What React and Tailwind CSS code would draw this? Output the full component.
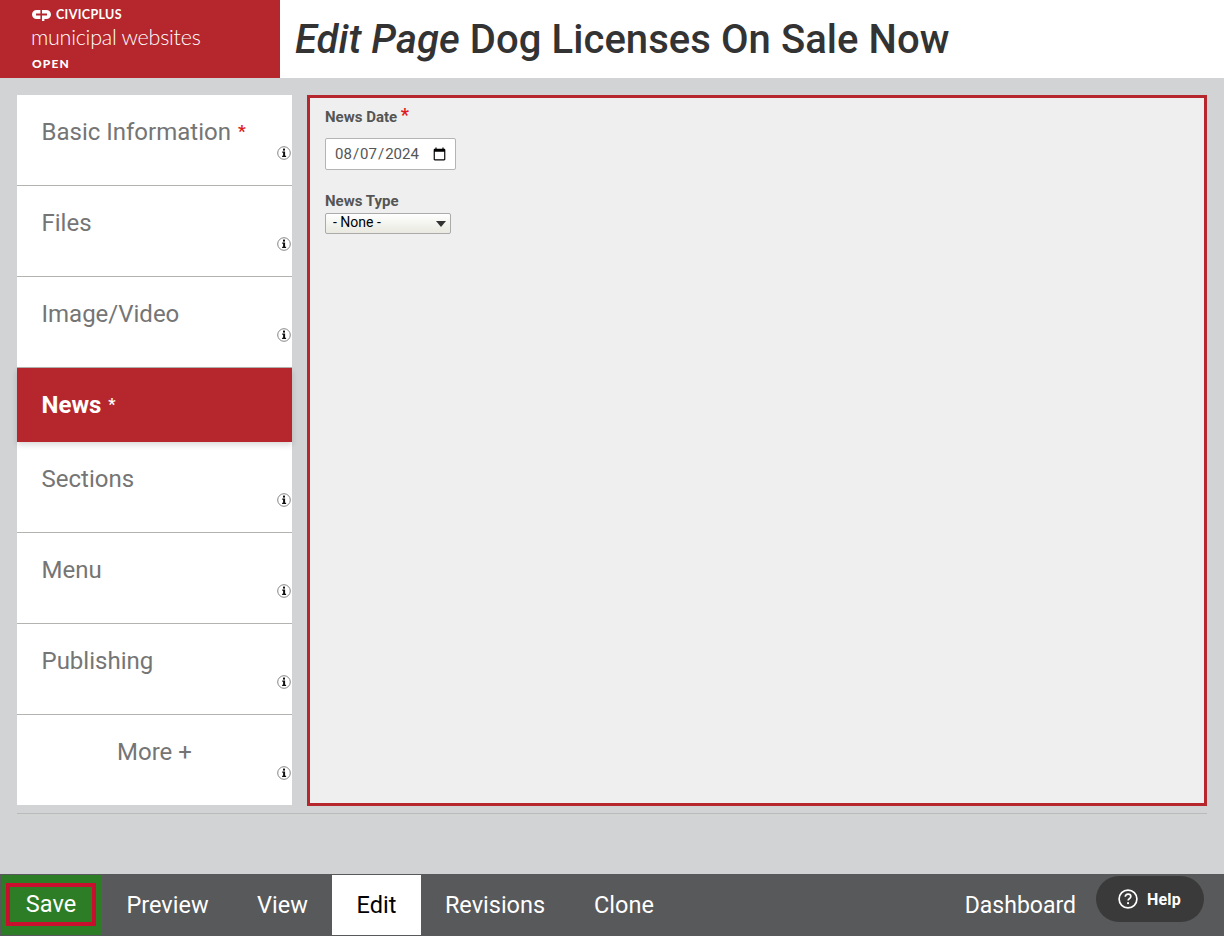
import React from 'react';

const tabs = [
  { label: 'Basic Information', req: true },
  { label: 'Files' },
  { label: 'Image/Video' },
  { label: 'News', req: true, active: true },
  { label: 'Sections' },
  { label: 'Menu' },
  { label: 'Publishing' },
  { label: 'More +', center: true, last: true },
];

const actions = [
  { label: 'Preview', cls: 'w-[131px]' },
  { label: 'View', cls: 'w-[99px]' },
  { label: 'Edit', cls: 'w-[89px] bg-white !text-black', },
  { label: 'Revisions', cls: 'w-[148px]' },
  { label: 'Clone', cls: 'w-[110px]' },
];

function InfoIcon() {
  return (
    <svg width="14" height="14" viewBox="0 0 14 14" className="absolute right-[1px] bottom-[25px]">
      <circle cx="7" cy="7" r="6.3" fill="#fff" stroke="#777" strokeWidth="0.9" />
      <rect x="6" y="2.6" width="2" height="2" fill="#111" />
      <path d="M5.2 5.6h2.9v4.2h1v1.2H5.1V9.8h1V6.8h-.9z" fill="#111" />
    </svg>
  );
}

function Tab({ tab }) {
  if (tab.active) {
    return (
      <div className="h-[74px] bg-[#b5272d] pl-[24.5px] pt-[22px] shadow-[0_3px_6px_rgba(0,0,0,0.15)] relative z-10">
        <span className="text-[24px] leading-[30px] font-bold text-white">{tab.label}</span>
        <span className="text-[16px] font-bold text-white ml-[7px] relative -top-[3px]">*</span>
      </div>
    );
  }
  return (
    <div className={`relative bg-white ${tab.last ? 'h-[90px]' : 'h-[91px] border-b border-[#b3b3b0]'} ${tab.center ? 'text-center' : 'pl-[24.5px]'} pt-[22px]`}>
      <span className="text-[24px] leading-[30px] text-[#757575]">{tab.label}</span>
      {tab.req && <span className="text-[17px] font-bold text-[#e01b1b] ml-[7px] relative -top-[3px]">*</span>}
      <InfoIcon />
    </div>
  );
}

export default function App() {
  return (
    <div className="w-[1224px] h-[936px] overflow-hidden bg-[#d1d3d4] flex flex-col relative font-['Roboto',sans-serif]">
      <header className="h-[78px] bg-white flex shrink-0">
        <div className="w-[280px] bg-[#b5272d] text-white pl-[31px] pt-[7px]">
          <div className="flex items-center h-[14px]">
            <svg width="19" height="11" viewBox="0 0 19 11" className="ml-px mr-[5px] mt-[3px]">
              <path d="M8.4 0H4.8C2 0 0 1.9 0 4.5S2 9 4.8 9h3.6V5.6H4V3.4h4.4z" fill="#fff" />
              <path d="M10 0h4.2C17 0 19 1.9 19 4.5S17 9 14.2 9h-1.8v2H10V5.6h5V3.4h-5z" fill="#fff" />
            </svg>
            <span className="text-[12.5px] font-bold leading-[14px] font-['Lato',sans-serif] tracking-[0.35px] mt-px">CIVICPLUS</span>
          </div>
          <div className="text-[21.5px] leading-[26px] font-light mt-[3px] tracking-[-0.25px] whitespace-nowrap font-['Lato',sans-serif]">municipal websites</div>
          <div className="text-[12px] font-black leading-[14px] mt-[7px] ml-px tracking-[1.1px] font-['Lato',sans-serif]">OPEN</div>
        </div>
        <h1 className="pl-[15px] pt-[16px] text-[40px] leading-[48px] font-medium tracking-[0.06px] text-[#333333] whitespace-nowrap">
          <em>Edit Page</em> Dog Licenses On Sale Now
        </h1>
      </header>

      <main className="flex-1 px-[17px] pt-[17px]">
        <div className="flex items-start gap-[15px] h-[711px]">
          <nav className="w-[275px] flex flex-col shrink-0">
            {tabs.map((t) => <Tab key={t.label} tab={t} />)}
          </nav>
          <section className="w-[900px] h-[711px] border-[3px] border-[#b5272d] bg-[#efefef] pl-[15px] pt-[10px]">
            <label className="block text-[15px] leading-[18px] font-bold text-[#555555]">
              News Date <span className="text-[#e01b1b] text-[18px] leading-[14px] relative -top-px">*</span>
            </label>
            <input
              type="date"
              defaultValue="2024-08-07"
              className="block mt-[12px] w-[131px] h-[32px] pl-[8px] pr-[6px] text-[15px] text-[#555555] bg-white border border-[#b4b4b4] rounded-[2px] font-['Roboto',sans-serif]"
            />
            <label className="block mt-[22px] text-[15px] leading-[18px] font-bold text-[#555555]">News Type</label>
            <div className="relative w-[126px] mt-[3px]">
              <select className="appearance-none block w-full h-[21px] pl-[7px] pb-[3px] text-[14px] leading-[16px] text-black border border-[#ababab] rounded-[2px] bg-gradient-to-b from-white to-[#e9e9e0] font-['Roboto',sans-serif]">
                <option>- None -</option>
              </select>
              <svg width="10" height="6" viewBox="0 0 10 6" className="absolute right-[5px] top-[8px] pointer-events-none">
                <path d="M0 0h10L5 6z" fill="#333" />
              </svg>
            </div>
          </section>
        </div>
        <div className="mt-[7px] h-px bg-[#b9bbb9]" />
      </main>

      <footer className="h-[62px] bg-[#58595b] flex shrink-0 text-white text-[23.5px]">
        <div className="w-[102px] pl-[2px] pt-px">
          <div className="w-[100px] h-[60px] bg-[#2d7d26] pl-[4px] pt-[8px]">
            <div className="w-[90px] h-[43px] border-[4px] border-[#c8102e] flex items-center justify-center leading-none pt-px">Save</div>
          </div>
        </div>
        {actions.map((a) => (
          <div key={a.label} className={`h-[60px] mt-px pt-[2px] flex items-center justify-center ${a.cls}`}>{a.label}</div>
        ))}
        <div className="ml-auto mr-[148px] flex items-center h-[60px] mt-px pt-[2px] text-[23px]">Dashboard</div>
      </footer>

      <div className="absolute left-[1096px] top-[876px] w-[108px] h-[46px] rounded-[23px] bg-[#3a3a3a] flex items-center pl-[22px] text-white">
        <svg width="20" height="20" viewBox="0 0 20 20">
          <circle cx="10" cy="10" r="8.9" fill="none" stroke="#fff" strokeWidth="1.7" />
          <path d="M7.3 7.8c0-1.6 1.2-2.6 2.8-2.6s2.7 1 2.7 2.3c0 2-2.7 2.1-2.7 4.1" fill="none" stroke="#fff" strokeWidth="1.7" />
          <rect x="9.1" y="13.2" width="1.9" height="1.9" fill="#fff" />
        </svg>
        <span className="ml-[9px] text-[16px] font-bold tracking-[0.2px] pt-px">Help</span>
      </div>
    </div>
  );
}
